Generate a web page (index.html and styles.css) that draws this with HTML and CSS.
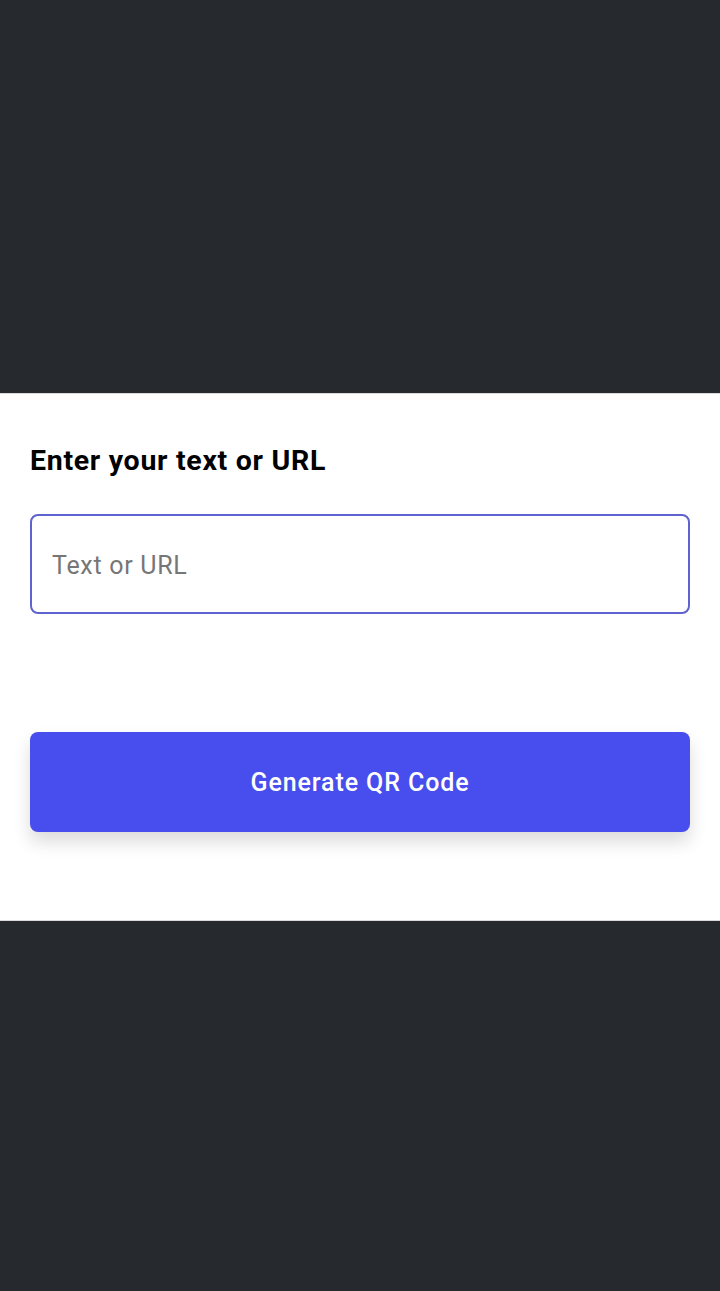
FILE: index.html
```html
<!DOCTYPE html>
<html>
<head>
<meta charset="utf-8">
<link rel="stylesheet" href="styles.css">
</head>
<body>
<div class="screen">
  <div class="top-space"></div>
  <div class="sheet">
    <h1 class="title">Enter your text or URL</h1>
    <input class="field" type="text" placeholder="Text or URL">
    <button class="generate">Generate QR Code</button>
  </div>
  <div class="bottom-space"></div>
</div>
</body>
</html>
```
FILE: styles.css
```css
html, body {
  margin: 0;
  padding: 0;
  height: 100%;
  background: #26292e;
  font-family: Roboto, "Noto Sans", sans-serif;
}
.screen {
  display: flex;
  flex-direction: column;
  height: 1291px;
}
.top-space {
  height: 393px;
  flex: none;
}
.sheet {
  flex: none;
  height: 528px;
  box-sizing: border-box;
  background: #ffffff;
  border-top: 1px solid #d9d9db;
  border-bottom: 1px solid #d9d9db;
  padding: 50px 30px 0 30px;
  display: flex;
  flex-direction: column;
}
.title {
  margin: 0;
  font-size: 28.5px;
  line-height: 33.6px;
  font-weight: 700;
  letter-spacing: 0.7px;
  color: #000000;
}
.field {
  margin-top: 36px;
  height: 100px;
  box-sizing: border-box;
  border: 2px solid #5f62cf;
  border-radius: 8px;
  padding: 3px 20px 0 20px;
  font-family: Roboto, "Noto Sans", sans-serif;
  font-size: 25px;
  letter-spacing: 0.7px;
  color: #222;
  outline: none;
  background: #fff;
}
.field::placeholder {
  color: #767676;
}
.generate {
  margin-top: 118px;
  height: 100px;
  border: none;
  border-radius: 8px;
  background: #484ded;
  color: #ffffff;
  font-family: Roboto, "Noto Sans", sans-serif;
  font-size: 25px;
  font-weight: 500;
  letter-spacing: 0.9px;
  padding: 2px 0 0 0;
  box-shadow: 0 10px 18px rgba(0, 0, 0, 0.14);
  cursor: pointer;
}
.bottom-space {
  flex: 1;
}
```
